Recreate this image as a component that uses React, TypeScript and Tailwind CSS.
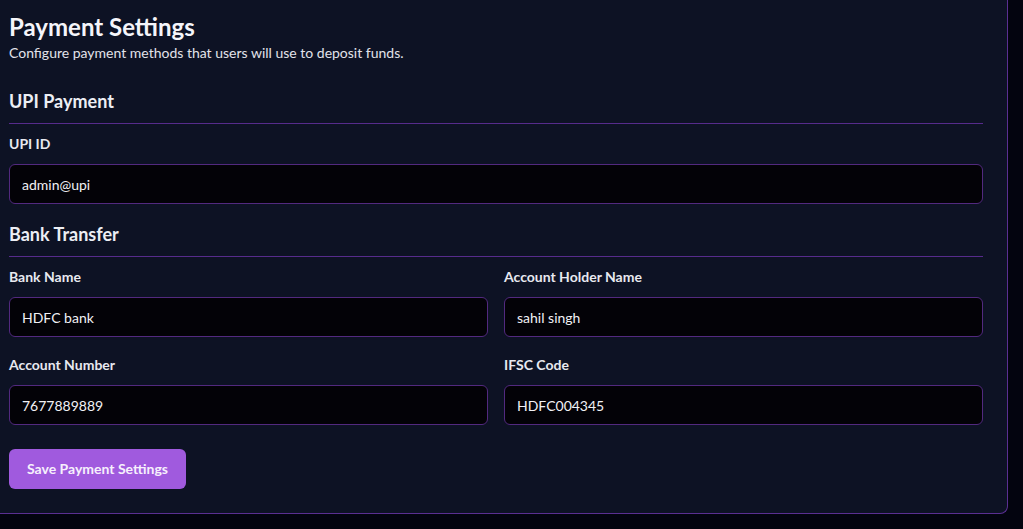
import React from "react";

const font = { fontFamily: 'Lato, "Noto Sans", sans-serif' };

function Field({ label, value }: { label: string; value: string }) {
  return (
    <div className="flex flex-col">
      <label className="text-sm font-bold text-[#e8e9f0] leading-5 mb-[10px]">{label}</label>
      <input
        defaultValue={value}
        className="h-10 w-full rounded-md border border-[#52297f] bg-[#030207] px-3 text-sm text-[#f1f1f5] outline-none"
      />
    </div>
  );
}

export default function App() {
  return (
    <div className="min-h-screen w-full bg-[#03040f] text-white" style={font}>
      <div className="w-[1008px] rounded-br-lg border-r border-b border-[#5a2f92] bg-[#0d1224] pl-[9px] pr-[24px] pt-[11px] pb-[24px]">
        <h1 className="text-2xl font-bold leading-8 text-[#f5f5fa]">Payment Settings</h1>
        <p className="text-sm leading-5 text-[#e2e3ea]">
          Configure payment methods that users will use to deposit funds.
        </p>

        <h2 className="mt-[24px] text-lg font-bold leading-7 text-[#eceef4]">UPI Payment</h2>
        <div className="mt-[8px] h-px bg-[#562b8c]" />
        <div className="mt-[10px]">
          <Field label="UPI ID" value="admin@upi" />
        </div>

        <h2 className="mt-[16px] text-lg font-bold leading-7 text-[#eceef4]">Bank Transfer</h2>
        <div className="mt-[8px] h-px bg-[#562b8c]" />
        <div className="mt-[10px] grid grid-cols-2 gap-x-4 gap-y-[18px]">
          <Field label="Bank Name" value="HDFC bank" />
          <Field label="Account Holder Name" value="sahil singh" />
          <Field label="Account Number" value="7677889889" />
          <Field label="IFSC Code" value="HDFC004345" />
        </div>

        <button className="mt-[24px] h-10 rounded-md bg-[#a05ade] px-[18px] text-sm font-bold text-[#f6f0fc]">
          Save Payment Settings
        </button>
      </div>
    </div>
  );
}
